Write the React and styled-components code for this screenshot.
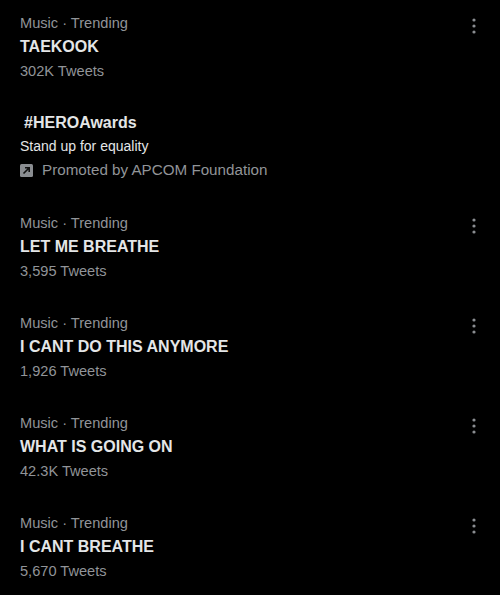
import React from "react";
import styled, { createGlobalStyle } from "styled-components";

const GlobalStyle = createGlobalStyle`
  body {
    margin: 0;
    background: #000;
    font-family: "Liberation Sans", Arial, sans-serif;
  }
`;

const trends = [
  { title: "TAEKOOK", count: "302K Tweets" },
  { promo: true },
  { title: "LET ME BREATHE", count: "3,595 Tweets" },
  { title: "I CANT DO THIS ANYMORE", count: "1,926 Tweets" },
  { title: "WHAT IS GOING ON", count: "42.3K Tweets" },
  { title: "I CANT BREATHE", count: "5,670 Tweets" },
];

const MoreIcon = () => (
  <svg width="6" height="18" viewBox="0 0 6 18">
    <circle cx="3" cy="3" r="1.6" fill="#8a8d91" />
    <circle cx="3" cy="9" r="1.6" fill="#8a8d91" />
    <circle cx="3" cy="15" r="1.6" fill="#8a8d91" />
  </svg>
);

const PromoIcon = () => (
  <svg width="13" height="13" viewBox="0 0 13 13">
    <rect width="13" height="13" rx="1.5" fill="#8a8d91" />
    <path d="M3.5 9.5 L9 4 M5 3.8 H9.2 V8" stroke="#111" strokeWidth="1.6" fill="none" />
  </svg>
);

const App = () => {
  return (
    <>
      <GlobalStyle />
      <List>
        {trends.map((t, i) =>
          t.promo ? (
            <Item key={i}>
              <Body>
                <Hashtag>#HEROAwards</Hashtag>
                <Desc>Stand up for equality</Desc>
                <Promoted>
                  <PromoIcon />
                  Promoted by APCOM Foundation
                </Promoted>
              </Body>
            </Item>
          ) : (
            <Item key={i}>
              <Body>
                <Meta>Music · Trending</Meta>
                <Title>{t.title}</Title>
                <Meta>{t.count}</Meta>
              </Body>
              <More>
                <MoreIcon />
              </More>
            </Item>
          )
        )}
      </List>
    </>
  );
};

const List = styled.div`
  width: 500px;
  height: 595px;
  background: #000;
  overflow: hidden;
`;

const Item = styled.div`
  display: flex;
  justify-content: space-between;
  height: 100px;
  padding: 11px 23px 0 20px;
  box-sizing: border-box;
`;

const Body = styled.div`
  display: flex;
  flex-direction: column;
`;

const Meta = styled.div`
  font-size: 14.6px;
  line-height: 24px;
  color: #919498;
`;

const Title = styled.div`
  font-size: 16px;
  font-weight: 700;
  line-height: 24px;
  color: #e4e6e7;
`;

const Hashtag = styled(Title)`
  padding-left: 4px;
`;

const Desc = styled.div`
  font-size: 14px;
  line-height: 23px;
  color: #e4e6e7;
`;

const Promoted = styled.div`
  display: flex;
  align-items: center;
  gap: 9px;
  font-size: 15.2px;
  line-height: 24px;
  color: #919498;
`;

const More = styled.div`
  padding-top: 6px;
`;

export default App;
